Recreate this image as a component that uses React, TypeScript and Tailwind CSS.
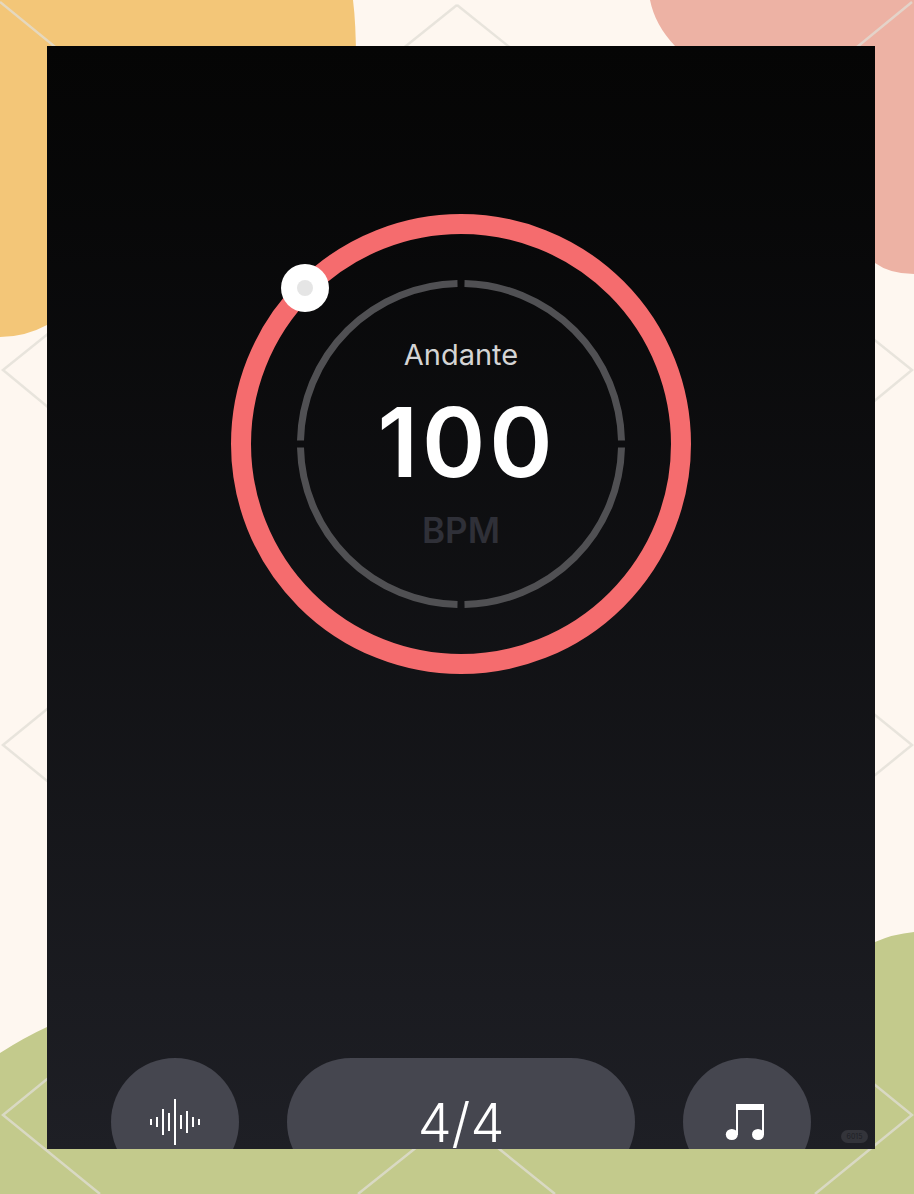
export default function App() {
  const bars: [number, number][] = [
    [151, 6],
    [157, 10],
    [163, 26],
    [169, 18],
    [175, 46],
    [181, 14],
    [187, 22],
    [193, 10],
    [199, 6],
  ];
  return (
    <div
      className="relative h-[1194px] w-[914px] overflow-hidden bg-[#fef7f0] pt-[46px] pl-[47px]"
      style={{ fontFamily: "Inter, 'Liberation Sans', sans-serif" }}
    >
      <svg className="absolute inset-0" width="914" height="1194" viewBox="0 0 914 1194" fill="none">
        <path d="M0 0H353Q356 24 356 60V250Q356 325 280 325H47Q25 337 0 337Z" fill="#f3c678" />
        <path d="M650 0H914V274Q890 274 875 263Q780 255 720 120Q700 70 675 46Q655 25 650 0Z" fill="#edb2a4" />
        <path d="M0 1053Q25 1037 47 1027L875 942Q893 934 914 932V1194H0Z" fill="#c3ca8c" />
        <g stroke="#e0ddd6" strokeWidth="2.5" strokeOpacity="0.75">
          <path d="M0 2L457 375L912 745L457 1115L358 1194" />
          <path d="M912 2L457 375L3 745L457 1115L555 1194" />
          <path d="M457 5L3 370L457 745L912 1115L815 1194" />
          <path d="M457 5L912 370L457 745L3 1115L100 1194" />
        </g>
      </svg>
      <div className="relative flex h-[1103px] w-[828px] flex-col items-center overflow-hidden bg-gradient-to-b from-[#050505] to-[#1e1f25] pt-[168px]">
        <div className="relative flex h-[460px] w-[460px] shrink-0 items-center justify-center">
          <svg className="absolute inset-0" width="460" height="460" viewBox="0 0 460 460" fill="none">
            <circle cx="230" cy="230" r="220" stroke="#f56c6e" strokeWidth="20" />
            <g stroke="#505053" strokeWidth="7">
              <path d="M226.5 69.5A160.5 160.5 0 0 0 69.5 226.5" />
              <path d="M233.5 69.5A160.5 160.5 0 0 1 390.5 226.5" />
              <path d="M390.5 233.5A160.5 160.5 0 0 1 233.5 390.5" />
              <path d="M226.5 390.5A160.5 160.5 0 0 1 69.5 233.5" />
            </g>
          </svg>
          <div className="relative flex flex-col items-center">
            <div className="text-[29px] leading-[34px] text-[#d4d4d4]">Andante</div>
            <div className="mt-[12px] pl-[12px] text-[96px] leading-[116px] font-semibold tracking-[4px] text-white">100</div>
            <div className="mt-[11px] text-[35px] leading-[39px] font-semibold text-[#2f3038]">BPM</div>
          </div>
          <div className="absolute top-[50px] left-[50px] flex h-12 w-12 items-center justify-center rounded-full bg-white">
            <div className="h-4 w-4 rounded-full bg-[#e5e5e5]" />
          </div>
        </div>
        <div className="mt-[384px] flex h-32 w-full shrink-0 items-center gap-12 px-16">
          <div className="relative h-32 w-32 shrink-0 rounded-full bg-[#45464f]">
            <svg className="absolute top-[41px] left-[39px]" width="52" height="46" viewBox="150 1099 52 46" fill="#ffffff">
              {bars.map(([x, h]) => (
                <rect key={x} x={x - 1} y={1122 - h / 2} width="2" height={h} />
              ))}
            </svg>
          </div>
          <div className="flex h-32 flex-1 items-center justify-center rounded-full bg-[#45464f] text-[54px] font-light text-white">
            4/4
          </div>
          <div className="relative h-32 w-32 shrink-0 rounded-full bg-[#45464f]">
            <svg className="absolute top-[46px] left-[42px]" width="40" height="37" viewBox="724 1104 40 37" fill="#ffffff">
              <path d="M735 1104H763V1135H761V1110H737V1135H735Z" />
              <ellipse cx="730.8" cy="1134.5" rx="6" ry="5.5" />
              <ellipse cx="757" cy="1134.5" rx="6" ry="5.5" />
            </svg>
          </div>
        </div>
        <div className="absolute top-[1084px] left-[794px] flex h-[13px] w-[27px] items-center justify-center rounded-full bg-[#33343a] text-[7px] leading-none text-[#1e1f25]">
          6015
        </div>
      </div>
    </div>
  );
}
